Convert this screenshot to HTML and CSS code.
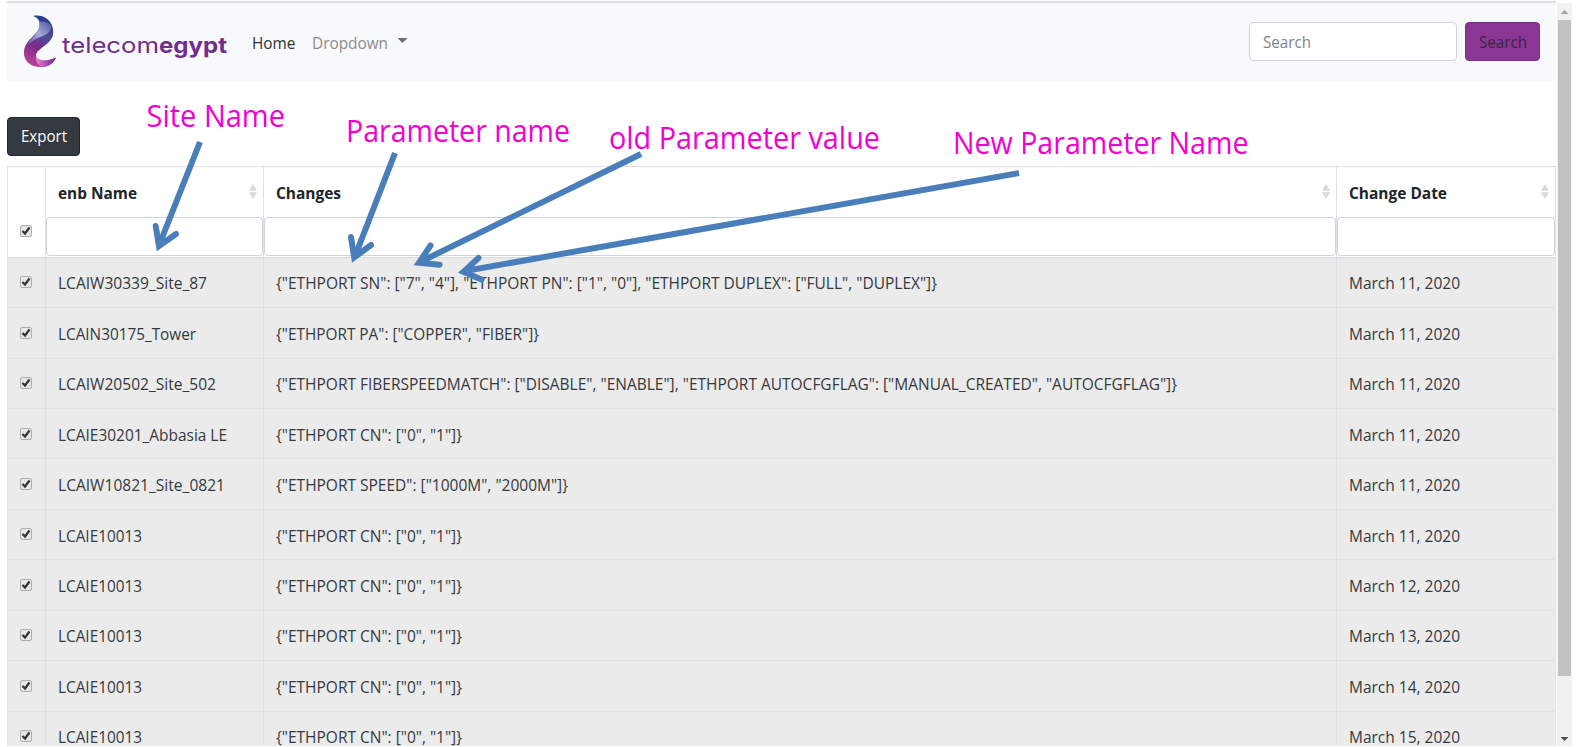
FILE: index.html
```html
<!DOCTYPE html>
<html lang="en">
<head>
<meta charset="utf-8">
<title>Telecom Egypt - Parameter changes</title>
<link rel="stylesheet" href="styles.css">
</head>
<body>
<div class="viewport">
  <main class="page">
    <nav class="navbar">
      <svg class="logo" width="208" height="60" viewBox="0 0 208 60">
        <defs>
          <linearGradient id="flame" x1="0.6" y1="0" x2="0.3" y2="1">
            <stop offset="0" stop-color="#243a86"/><stop offset=".38" stop-color="#54499a"/>
            <stop offset=".62" stop-color="#7c2b8a"/><stop offset="1" stop-color="#c0449a"/>
          </linearGradient>
          <linearGradient id="shine" x1="1" y1="0" x2="0" y2="1">
            <stop offset="0" stop-color="#4b55a0"/><stop offset=".5" stop-color="#a9add8"/><stop offset="1" stop-color="#6c3d98"/>
          </linearGradient>
          <linearGradient id="tail" x1="0" y1="0" x2="1" y2="0">
            <stop offset="0" stop-color="#e58cc8"/><stop offset=".5" stop-color="#b04fae"/><stop offset="1" stop-color="#6b1f86"/>
          </linearGradient>
        </defs>
        <path d="M9 3C19 1 29 7 29.300 19C29.500 31 13 35 12 42C11.500 50 24 49 32 44.500C29 51 24 54 17 54C6 54 0 48 0 40C0 25 17 22 15.500 10C15 6 12 4 9 3Z" fill="url(#flame)"/>
        <path d="M15.500 9C21 8 26 10 27 13C28 21 18 23 12 26C8 28 5 31 2.500 34C5 25 17 20 15.500 9Z" fill="url(#shine)"/>
        <path d="M12 42C13 49 25 48 32 44.500C29 51 24 54 18 53.500C13 52 11 47 12 42Z" fill="url(#tail)"/>
        <text class="logo-light" x="38" y="39.500" textLength="97" lengthAdjust="spacingAndGlyphs">telecom</text>
        <text class="logo-bold" x="135" y="39.500" textLength="68" lengthAdjust="spacingAndGlyphs">egypt</text>
      </svg>
      <a class="nav-link active"><span data-w="43.500">Home</span></a>
      <a class="nav-link"><span data-w="76">Dropdown</span><i class="caret"></i></a>
      <form class="search">
        <div class="search-input"><span data-w="48">Search</span></div>
        <div class="search-btn"><span data-w="48">Search</span></div>
      </form>
    </nav>
    <div class="toolbar"><div class="export"><span data-w="46">Export</span></div></div>
    <div class="table" id="table">
      <div class="row head">
        <div class="cell check-cell"><i class="check"></i></div>
        <div class="cell"><div class="title"><span data-w="79">enb Name</span><i class="sort"></i></div><div class="filter"></div></div>
        <div class="cell"><div class="title"><span data-w="65">Changes</span><i class="sort"></i></div><div class="filter"></div></div>
        <div class="cell"><div class="title"><span data-w="98">Change Date</span><i class="sort"></i></div><div class="filter"></div></div>
      </div>
    </div>
  </main>
  <aside class="scrollbar"><i class="up"></i><b class="thumb"></b><i class="down"></i></aside>
</div>
<svg class="notes" width="1577" height="747" viewBox="0 0 1577 747">
  <g class="labels">
    <text x="146.500" y="127" textLength="138.500" lengthAdjust="spacingAndGlyphs">Site Name</text>
    <text x="346" y="142" textLength="224" lengthAdjust="spacingAndGlyphs">Parameter name</text>
    <text x="609" y="149" textLength="271" lengthAdjust="spacingAndGlyphs">old Parameter value</text>
    <text x="953" y="154" textLength="295.500" lengthAdjust="spacingAndGlyphs">New Parameter Name</text>
  </g>
  <g class="arrows">
    <path d="M200 142L160 243"/><path class="tip" d="M155.7 226L159 246L176 234"/>
    <path d="M395 153L355.500 255"/><path class="tip" d="M351 237L354.200 257.500L371 245"/>
    <path d="M641 154L421 261.500"/><path class="tip" d="M430.500 245.500L419 262.800L439.500 264.700"/>
    <path d="M1019 173L465 271"/><path class="tip" d="M478.500 258L463.500 271.800L481.500 279.500"/>
  </g>
</svg>
<script src="app.js"></script>
</body>
</html>
```
FILE: styles.css
```css
* { box-sizing: border-box; }
body { margin: 0; background: #fff; color: #35393d; font: 16px/24px "Open Sans", "Noto Sans", sans-serif; overflow: hidden; }
i { font-style: normal; }
.viewport { display: flex; width: 1572px; height: 746px; padding: 1px 0 0 7px; overflow: hidden; }
.page { width: 1549px; height: 745px; border-top: 2px solid #dadde2; overflow: hidden; }
.navbar { display: flex; align-items: center; height: 78px; padding: 0 16px 0 17px; background: #f8f9fa; }
.logo { margin-right: 20px; flex: none; margin-top: 2px; }
.logo text { font-family: "Inter", sans-serif; font-size: 22px; fill: #6f2c91; }
.logo .logo-light { font-weight: 400; }
.logo .logo-bold { font-weight: 700; }
.nav-link { display: flex; align-items: center; margin: 2px 16px 0 0; color: #8b8c8d; }
.nav-link.active { color: #303132; }
[data-w] { display: inline-block; white-space: nowrap; transform-origin: 0 50%; }
.caret { width: 10px; height: 5px; margin: -5px 0 0 10px; background: #6f7071; clip-path: polygon(0 0, 100% 0, 50% 100%); }
.search { display: flex; gap: 8px; margin: -1px 0 0 auto; }
.search-input { width: 208px; height: 39px; padding: 7px 13px; border: 1px solid #ced4da; border-radius: 4px; background: #fff; color: #7b838a; }
.search-btn { width: 75px; height: 39px; padding: 7px 13px; border: 1px solid #7d2d8b; border-radius: 4px; background: #8b3694; color: #34283d; }
.toolbar { height: 85px; padding-top: 36px; }
.export { width: 73px; height: 39px; padding: 6px 13px; border: 1px solid #23272b; border-radius: 4px; background: #343a40; color: #fff; }
.table { width: 1549px; border: 1px solid #dee2e6; border-bottom: 0; }
.row { display: grid; grid-template-columns: 37px 218px 1073px 1fr; height: 50.45px; background: #ebebeb; border-bottom: 1px solid #dfe3e6; }
.cell { padding: 13.700px 12px 0; border-left: 1px solid #dee2e6; white-space: nowrap; }
.cell:first-child { border-left: 0; }
.check-cell { padding: 18.500px 0 0 12px; }
.check { display: block; width: 12px; height: 12px; border: 1px solid #aeaeae; border-radius: 2px; background: #e6e6e6; }
.check svg { display: block; }
.head { height: 90.700px; background: #fff; border-bottom: 1px solid #d5d9df; color: #212529; font-weight: 700; }
.head .cell { padding: 0; }
.head .check-cell { padding: 58px 0 0 12px; }
.title { display: flex; align-items: center; justify-content: space-between; height: 50px; padding: 2px 6px 0 12px; }
.sort { width: 8px; height: 15px; margin-top: -3px; background: #d9d9d9; clip-path: polygon(50% 0, 100% 45%, 0 45%, 0 55%, 100% 55%, 50% 100%, 0 55%, 0 45%); }
.filter { height: 39px; border: 1px solid #ced4da; border-radius: 4px; background: #fff; }
.scrollbar { display: flex; flex-direction: column; align-items: center; width: 15px; height: 745px; margin-left: 1px; margin-top: 2px; background: #f1f1f1; }
.up, .down { width: 8px; height: 4px; flex: none; }
.up { margin: 7px 0 6px; background: #a3a3a3; clip-path: polygon(50% 0, 100% 100%, 0 100%); }
.thumb { width: 13px; height: 656px; background: #c1c1c1; }
.down { margin-top: 61px; background: #505050; clip-path: polygon(0 0, 100% 0, 50% 100%); }
.notes { position: absolute; left: 0; top: 0; pointer-events: none; }
.labels { font: 400 31px "Open Sans", "Noto Sans", sans-serif; fill: #f200d0; }
.arrows { fill: none; stroke: #4a7ebb; stroke-width: 6; }
.arrows .tip { stroke-linecap: round; stroke-linejoin: miter; }
```
FILE: app.js
```js
const CN = ['{"ETHPORT CN": ["0", "1"]}', 186];
const rows = [
  ['LCAIW30339_Site_87', 149, '{"ETHPORT SN": ["7", "4"], "ETHPORT PN": ["1", "0"], "ETHPORT DUPLEX": ["FULL", "DUPLEX"]}', 661, 11],
  ['LCAIN30175_Tower', 138, '{"ETHPORT PA": ["COPPER", "FIBER"]}', 263, 11],
  ['LCAIW20502_Site_502', 158, '{"ETHPORT FIBERSPEEDMATCH": ["DISABLE", "ENABLE"], "ETHPORT AUTOCFGFLAG": ["MANUAL_CREATED", "AUTOCFGFLAG"]}', 901, 11],
  ['LCAIE30201_Abbasia LE', 169, ...CN, 11],
  ['LCAIW10821_Site_0821', 167, '{"ETHPORT SPEED": ["1000M", "2000M"]}', 292, 11],
  ['LCAIE10013', 84, ...CN, 11],
  ['LCAIE10013', 84, ...CN, 12],
  ['LCAIE10013', 84, ...CN, 13],
  ['LCAIE10013', 84, ...CN, 14],
  ['LCAIE10013', 84, ...CN, 15],
];
const table = document.getElementById('table');
for (const [name, nameWidth, change, changeWidth, day] of rows) {
  const row = document.createElement('div');
  row.className = 'row';
  row.innerHTML = '<div class="cell check-cell"><i class="check"></i></div>' +
    `<div class="cell"><span data-w="${nameWidth}">${name}</span></div>` +
    `<div class="cell"><span data-w="${changeWidth}">${change}</span></div>` +
    `<div class="cell"><span data-w="111">March ${day}, 2020</span></div>`;
  table.append(row);
}
for (const box of document.querySelectorAll('.check')) {
  box.innerHTML = '<svg width="10" height="10" viewBox="0 0 10 10"><path d="M1.500 5L4 7.500L8.500 1.500" fill="none" stroke="#333" stroke-width="2.200"/></svg>';
}
for (const el of document.querySelectorAll('[data-w]')) {
  const natural = el.getBoundingClientRect().width;
  const width = Number(el.dataset.w);
  el.style.transform = `scaleX(${width / natural})`;
  el.style.marginRight = `${width - natural}px`;
}
```
